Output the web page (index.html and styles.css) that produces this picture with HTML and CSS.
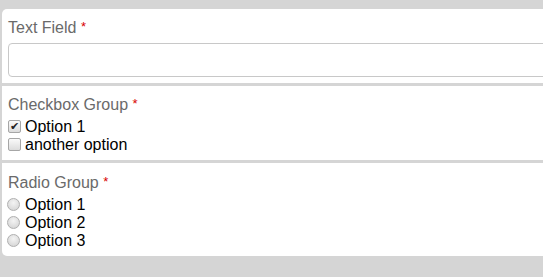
FILE: index.html
```html
<!DOCTYPE html>
<html>
<head>
<meta charset="utf-8">
<link rel="stylesheet" href="styles.css">
</head>
<body>
<form class="panel">
  <div class="section section-text">
    <label class="field-label" for="tf">Text Field <span class="req">*</span></label>
    <input id="tf" class="text-input" type="text">
  </div>
  <div class="section section-check">
    <div class="field-label">Checkbox Group <span class="req">*</span></div>
    <label class="option"><span class="box checked">&#10004;</span>Option 1</label>
    <label class="option"><span class="box"></span>another option</label>
  </div>
  <div class="section section-radio">
    <div class="field-label">Radio Group <span class="req">*</span></div>
    <label class="option"><span class="radio"></span>Option 1</label>
    <label class="option"><span class="radio"></span>Option 2</label>
    <label class="option"><span class="radio"></span>Option 3</label>
  </div>
</form>
</body>
</html>
```
FILE: styles.css
```css
html, body {
  margin: 0;
  padding: 0;
  overflow: hidden;
  background: #d5d5d5;
}
body {
  padding-top: 9px;
  height: 277px;
  box-sizing: border-box;
  font-family: "Liberation Sans", Arial, sans-serif;
  font-size: 16px;
}
.panel {
  margin: 0 0 0 2px;
  width: 580px;
  display: flex;
  flex-direction: column;
  gap: 3px;
}
.section {
  background: #fff;
  padding: 10px 6px 6px 6px;
  display: flex;
  flex-direction: column;
}
.section-text {
  border-top-left-radius: 5px;
}
.section-text .field-label {
  margin-bottom: 5px;
}
.section-check {
  padding-bottom: 6px;
}
.section-radio {
  padding-top: 11px;
  border-bottom-left-radius: 5px;
}
.field-label {
  color: #6a6a6a;
  line-height: 18px;
  margin-bottom: 3px;
  display: block;
}
.req {
  color: #d80000;
  font-size: 13px;
  position: relative;
  top: -2px;
}
.text-input {
  margin: 0;
  height: 34px;
  box-sizing: border-box;
  border: 1px solid #c8c8c8;
  border-radius: 4px;
  background: #fff;
  width: 100%;
  font: inherit;
  padding: 0 8px;
}
.option {
  display: flex;
  align-items: center;
  line-height: 18px;
  color: #000;
}
.box {
  width: 11px;
  height: 11px;
  border: 1px solid #a6a6a6;
  border-radius: 2px;
  background: linear-gradient(#fafafa, #dcdcdc);
  margin-right: 4px;
  margin-top: -2px;
  box-sizing: content-box;
  display: flex;
  align-items: center;
  justify-content: center;
  font-size: 11px;
  line-height: 11px;
  color: #222;
}
.radio {
  width: 11px;
  height: 11px;
  border: 1px solid #b0b0b0;
  border-radius: 50%;
  background: radial-gradient(circle at 50% 35%, #f4f4f4, #d0d0d0);
  margin-left: -1px;
  margin-right: 5px;
  margin-top: -1px;
}
```
